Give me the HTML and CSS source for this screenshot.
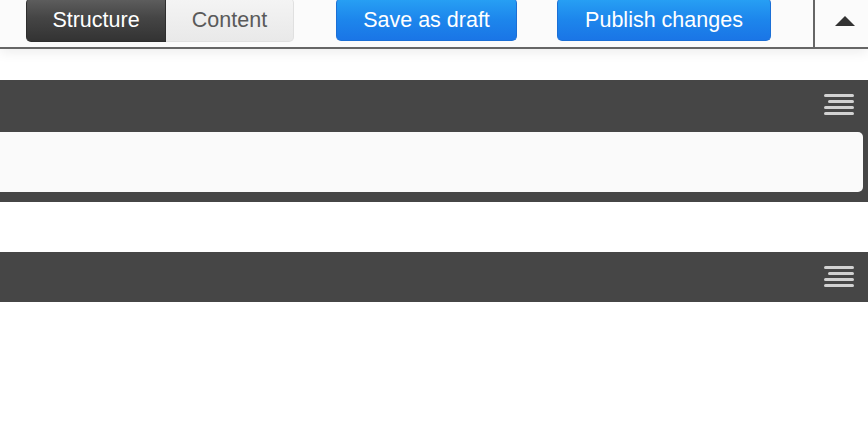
FILE: index.html
```html
<!DOCTYPE html>
<html>
<head>
<meta charset="utf-8">
<link rel="stylesheet" href="styles.css">
</head>
<body>
<header class="topbar">
  <div class="segmented">
    <button class="seg seg-active">Structure</button>
    <button class="seg">Content</button>
  </div>
  <button class="btn-blue btn-draft">Save as draft</button>
  <button class="btn-blue btn-publish">Publish changes</button>
  <div class="collapse">
    <span class="triangle"></span>
  </div>
</header>
<main class="content">
  <section class="block block-first">
    <div class="block-head">
      <span class="menu-icon"><i></i><i class="short"></i><i></i><i></i></span>
    </div>
    <div class="block-panel"></div>
  </section>
  <section class="block block-second">
    <div class="block-head">
      <span class="menu-icon"><i></i><i class="short"></i><i></i><i></i></span>
    </div>
  </section>
</main>
</body>
</html>
```
FILE: styles.css
```css
html, body {
  margin: 0;
  padding: 0;
  background: #ffffff;
  font-family: "Liberation Sans", Arial, Helvetica, sans-serif;
  overflow: hidden;
}

.topbar {
  position: relative;
  z-index: 2;
  display: flex;
  align-items: flex-start;
  height: 47px;
  background: #fbfbfb;
  border-bottom: 2px solid #666666;
  box-shadow: 0 3px 12px rgba(0, 0, 0, 0.08);
}

.segmented {
  display: flex;
  margin: -2px 0 0 26px;
  height: 44px;
}

.seg {
  font-family: inherit;
  font-size: 21.5px;
  height: 44px;
  padding: 1px 0 0;
  border: none;
  cursor: pointer;
}

.seg-active {
  width: 140px;
  color: #ffffff;
  background: linear-gradient(#5e5e5e, #454545 45%, #333333);
  border: 1px solid #2e2e2e;
  border-top-color: #8a8a8a;
  border-radius: 5px 0 0 5px;
}

.seg:not(.seg-active) {
  width: 128px;
  color: #5a5a5a;
  background: linear-gradient(#f4f4f4, #e9e9e9);
  border: 1px solid #e0e0e0;
  border-left: none;
  border-radius: 0 5px 5px 0;
}

.btn-blue {
  font-family: inherit;
  font-size: 21.5px;
  color: #ffffff;
  height: 43px;
  margin-top: -2px;
  padding: 1px 0 0;
  background: linear-gradient(#27a0f4, #1d86ec 50%, #1a75e6);
  border: 1px solid #1b6fd6;
  border-top-color: #5cbcf8;
  border-radius: 5px;
  cursor: pointer;
}

.btn-draft {
  width: 181px;
  margin-left: 42px;
}

.btn-publish {
  width: 214px;
  margin-left: 40px;
}

.collapse {
  margin-left: 42px;
  height: 47px;
  flex: 1;
  border-left: 2px solid #666666;
  display: flex;
  justify-content: flex-start;
  padding-left: 20px;
  padding-top: 16px;
  box-sizing: border-box;
}

.triangle {
  width: 0;
  height: 0;
  border-left: 10px solid transparent;
  border-right: 10px solid transparent;
  border-bottom: 10px solid #333333;
}

.content {
  padding-top: 31px;
}

.block {
  background: #464646;
}

.block-first {
  padding-bottom: 10px;
}

.block-first .block-head {
  height: 52px;
}

.block-second {
  margin-top: 50px;
}

.block-second .block-head {
  height: 50px;
}

.block-head {
  display: flex;
  justify-content: flex-end;
  align-items: flex-start;
  padding: 14px 14px 0 0;
  box-sizing: border-box;
}

.menu-icon {
  display: flex;
  flex-direction: column;
  align-items: flex-end;
  gap: 3px;
  width: 30px;
}

.menu-icon i {
  display: block;
  width: 30px;
  height: 3px;
  border-radius: 2px;
  background: #d2d2d2;
}

.menu-icon i.short {
  width: 26px;
}

.block-panel {
  height: 60px;
  margin: 0 5px 0 -8px;
  background: #fafafa;
  border-radius: 5px;
}
```
